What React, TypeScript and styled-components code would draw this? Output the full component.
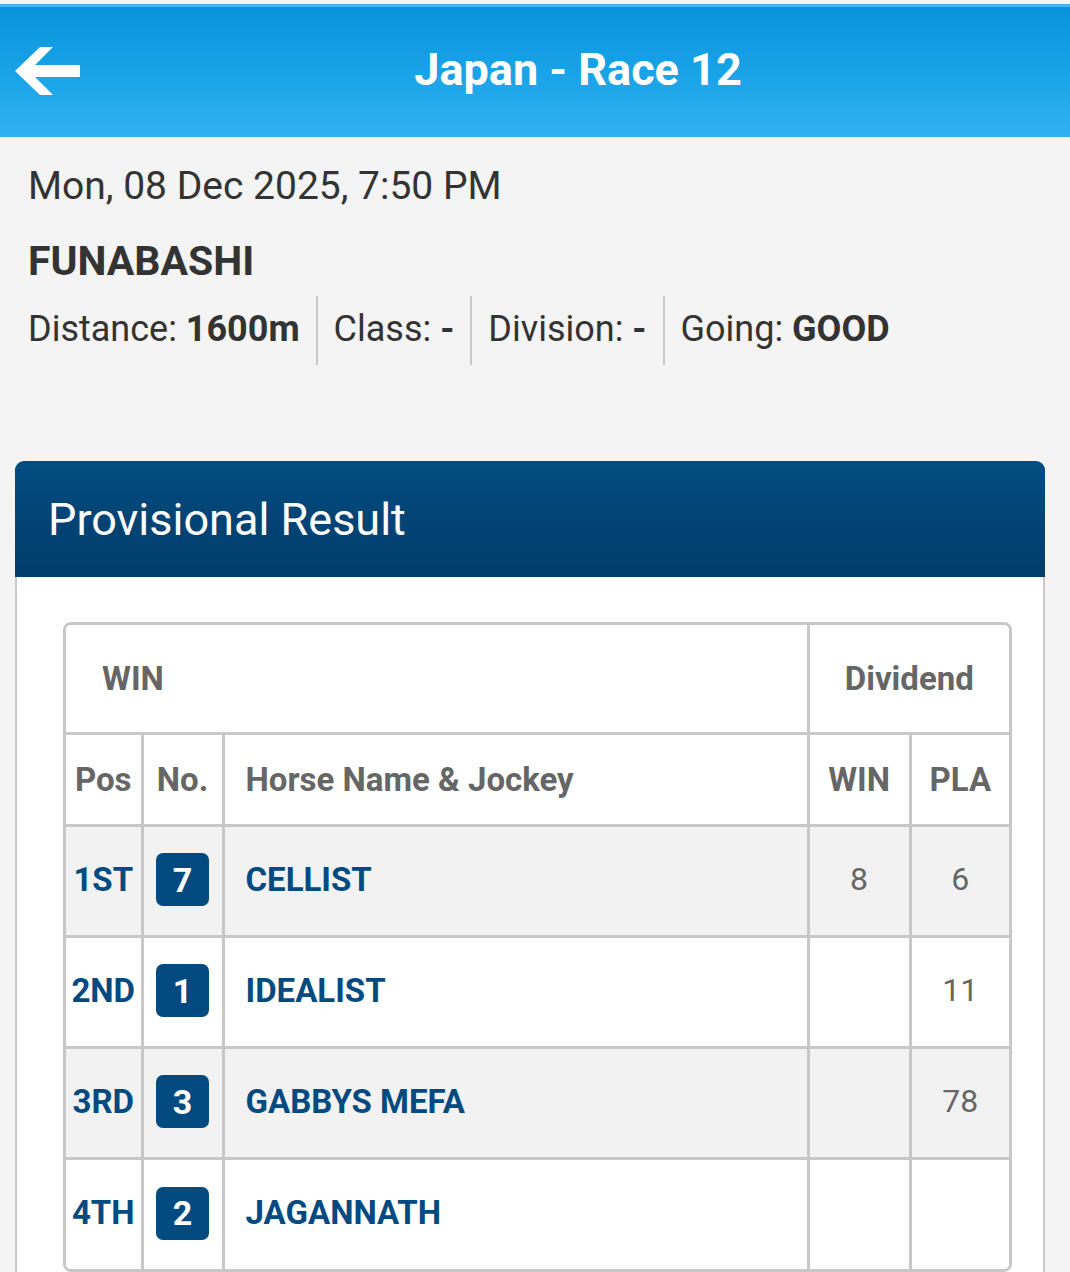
import styled, { createGlobalStyle } from 'styled-components'

const GlobalStyle = createGlobalStyle`
  html, body {
    margin: 0;
    padding: 0;
    background: #f4f4f4;
    font-family: Roboto, 'Noto Sans', Arial, sans-serif;
  }
`

const PageStyled = styled.div`
  padding-top: 4px;
  min-height: 1272px;
  background: #f4f4f4;
`

const HeaderStyled = styled.header`
  display: flex;
  align-items: center;

  height: 130px;

  background: linear-gradient(180deg, #0893da 0%, #1ba4e8 55%, #2fb2f3 100%);
  border-top: 3px solid #45b3ef;
`

const BackButton = styled.button`
  display: flex;
  align-items: center;
  justify-content: flex-start;

  width: 86px;
  height: 100%;
  padding: 0 0 0 14px;

  cursor: pointer;

  background: 0;
  border: 0;
`

const TitleStyled = styled.h1`
  flex: 1;

  margin: 0;
  padding-bottom: 5px;

  color: #fff;
  font-size: 45px;
  font-weight: 700;
  text-align: center;
`

const InfoStyled = styled.section`
  padding: 26px 28px 0;
  color: #333;
`

const DateStyled = styled.div`
  font-size: 39px;
  line-height: 46px;
`

const VenueStyled = styled.div`
  margin-top: 28px;

  font-size: 41px;
  font-weight: 700;
  line-height: 48px;
`

const DetailsStyled = styled.div`
  display: flex;

  margin-top: 11px;
`

const DetailItem = styled.div`
  height: 69px;
  padding: 0 16px;

  font-size: 36px;
  line-height: 67px;

  border-left: 2px solid #c9c9c9;

  &:first-child {
    padding-left: 0;
    border-left: 0;
  }

  & b {
    font-weight: 700;
  }
`

const CardStyled = styled.section`
  width: 1030px;
  margin: 96px 0 0 15px;
`

const CardHeader = styled.div`
  display: flex;
  align-items: center;

  height: 116px;
  padding-left: 33px;

  color: #fff;
  font-size: 45px;

  background: linear-gradient(180deg, #034c81 0%, #013c6a 100%);
  border-radius: 9px 9px 0 0;
`

const CardBody = styled.div`
  padding: 45px 31px 0 46px;

  background: #fff;
  border-right: 2px solid #c8c8c8;
  border-left: 2px solid #c8c8c8;
`

const TableWrap = styled.div`
  overflow: hidden;

  border: 3px solid #c8c8c8;
  border-radius: 8px;
`

const TableStyled = styled.table`
  width: 100%;

  table-layout: fixed;
  border-collapse: collapse;

  td,
  th {
    padding: 0;
    border: 3px solid #c8c8c8;
  }

  tr:first-child > * {
    border-top: 0;
  }

  tr:last-child > * {
    border-bottom: 0;
  }

  tr > *:first-child {
    border-left: 0;
  }

  tr > *:last-child {
    border-right: 0;
  }
`

const HeadCell = styled.th<{ $align?: 'left' | 'center'; $pad?: number }>`
  color: #666;
  font-size: 33px;
  font-weight: 700;
  text-align: ${({ $align }) => $align || 'center'};
  padding-left: ${({ $pad }) => $pad || 0}px !important;
`

const HeadRow = styled.tr<{ $height: number }>`
  height: ${({ $height }) => $height}px;
  background: #fff;
`

const ResultRow = styled.tr<{ $shaded: boolean }>`
  height: 111px;
  background: ${({ $shaded }) => ($shaded ? '#f2f2f2' : '#fff')};
`

const PosCell = styled.td`
  padding-bottom: 3px !important;

  color: #024a80;
  font-size: 33px;
  font-weight: 700;
  text-align: center;
`

const NoCell = styled.td`
  text-align: center;
`

const Badge = styled.span`
  display: inline-flex;
  align-items: center;
  justify-content: center;

  width: 53px;
  height: 53px;
  margin-bottom: 2px;

  color: #fff;
  font-size: 34px;
  font-weight: 700;

  background: #024a80;
  border-radius: 7px;
`

const HorseCell = styled.td`
  padding-left: 21px !important;
  padding-bottom: 3px !important;

  color: #024a80;
  font-size: 33px;
  font-weight: 700;
`

const DividendCell = styled.td`
  padding-bottom: 3px !important;

  color: #666;
  font-size: 32px;
  text-align: center;
`

const results = [
  { pos: '1ST', no: 7, horse: 'CELLIST', win: '8', pla: '6' },
  { pos: '2ND', no: 1, horse: 'IDEALIST', win: '', pla: '11' },
  { pos: '3RD', no: 3, horse: 'GABBYS MEFA', win: '', pla: '78' },
  { pos: '4TH', no: 2, horse: 'JAGANNATH', win: '', pla: '' },
]

const BackArrow = () => (
  <svg width="66" height="50" viewBox="0 0 66 50" fill="#fff">
    <polygon points="1,24 26,0 39,0 21,18 66,18 66,30 21,30 39,48 26,48" />
  </svg>
)

export default function App() {
  return (
    <PageStyled>
      <GlobalStyle />

      <HeaderStyled>
        <BackButton aria-label="back">
          <BackArrow />
        </BackButton>
        <TitleStyled>Japan - Race 12</TitleStyled>
      </HeaderStyled>

      <InfoStyled>
        <DateStyled>Mon, 08 Dec 2025, 7:50 PM</DateStyled>
        <VenueStyled>FUNABASHI</VenueStyled>
        <DetailsStyled>
          <DetailItem>
            Distance: <b>1600m</b>
          </DetailItem>
          <DetailItem>
            Class: <b>-</b>
          </DetailItem>
          <DetailItem>
            Division: <b>-</b>
          </DetailItem>
          <DetailItem>
            Going: <b>GOOD</b>
          </DetailItem>
        </DetailsStyled>
      </InfoStyled>

      <CardStyled>
        <CardHeader>Provisional Result</CardHeader>
        <CardBody>
          <TableWrap>
            <TableStyled>
              <colgroup>
                <col style={{ width: 76 }} />
                <col style={{ width: 81 }} />
                <col style={{ width: 585 }} />
                <col style={{ width: 102 }} />
                <col />
              </colgroup>
              <tbody>
                <HeadRow $height={108}>
                  <HeadCell colSpan={3} $align="left" $pad={36}>
                    WIN
                  </HeadCell>
                  <HeadCell colSpan={2}>Dividend</HeadCell>
                </HeadRow>
                <HeadRow $height={92}>
                  <HeadCell>Pos</HeadCell>
                  <HeadCell>No.</HeadCell>
                  <HeadCell $align="left" $pad={21}>
                    Horse Name &amp; Jockey
                  </HeadCell>
                  <HeadCell>WIN</HeadCell>
                  <HeadCell>PLA</HeadCell>
                </HeadRow>
                {results.map((r, i) => (
                  <ResultRow key={r.pos} $shaded={i % 2 === 0}>
                    <PosCell>{r.pos}</PosCell>
                    <NoCell>
                      <Badge>{r.no}</Badge>
                    </NoCell>
                    <HorseCell>{r.horse}</HorseCell>
                    <DividendCell>{r.win}</DividendCell>
                    <DividendCell>{r.pla}</DividendCell>
                  </ResultRow>
                ))}
              </tbody>
            </TableStyled>
          </TableWrap>
        </CardBody>
      </CardStyled>
    </PageStyled>
  )
}
